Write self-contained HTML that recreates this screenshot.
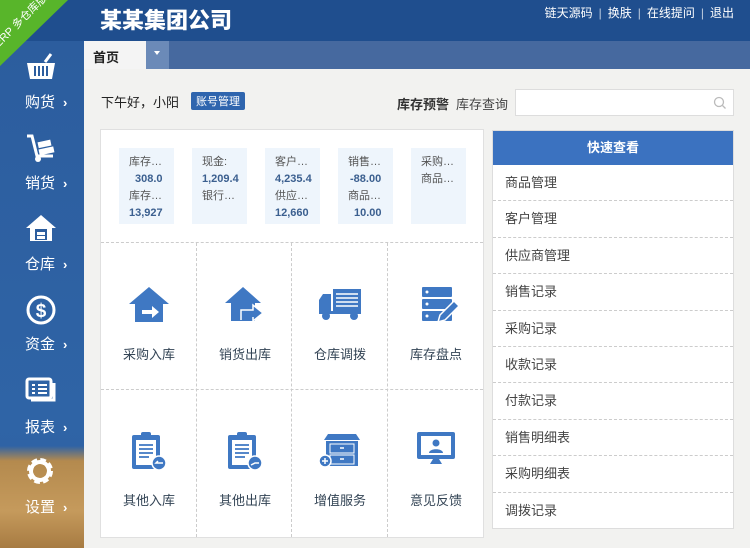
<!DOCTYPE html>
<html><head><meta charset="utf-8"><style>
*{margin:0;padding:0;box-sizing:border-box}
body{width:750px;height:548px;overflow:hidden;background:#f2f2f0;font-family:"Liberation Sans","Noto Sans CJK SC",sans-serif;position:relative;font-size:13px;color:#333}
.hdr{position:absolute;left:0;top:0;width:750px;height:41px;background:#1f4e8e}
.logo{position:absolute;left:100px;top:3px;color:#fff;font-size:22px;font-weight:900;letter-spacing:0px}
.links{position:absolute;right:16px;top:4px;color:#fff;font-size:12px}
.links span{margin:0 6px;opacity:.7}
.tabbar{position:absolute;left:84px;top:41px;width:666px;height:28px;background:#46699f}
.tab{position:absolute;left:0;top:0;width:62px;height:28px;background:#f4f4f4;font-size:13px;font-weight:bold;padding:6px 0 0 9px;color:#222}
.dd{position:absolute;left:62px;top:0;width:23px;height:28px;background:#6b8ab8}
.dd:after{content:"";position:absolute;left:8px;top:10px;border:3px solid transparent;border-top:4px solid #fff}
.side{position:absolute;left:0;top:41px;width:84px;height:507px;background:linear-gradient(#2c5d9e,#2f64a6 380px,#2f63a5 405px,#b48a4e 420px,#c59a5c 470px,#a77b42)}
.cornerbg{position:absolute;left:0;top:0;width:68px;height:66px;background:#58b52a;clip-path:polygon(0 0,100% 0,0 100%)}
.corner{position:absolute;left:-14px;top:12px;width:70px;height:18px;transform:rotate(-45deg);color:#fff;font-size:11px;text-align:center;line-height:18px;white-space:nowrap}
.ni{position:absolute;left:0;width:84px;color:#fff;text-align:center}
.ni .t{position:absolute;left:25px;font-size:15px;white-space:nowrap}
.ni .t b{font-weight:bold;font-size:13px;margin-left:8px}
.ni svg{position:absolute;left:25px}
.greet{position:absolute;left:101px;top:92px;font-size:13px;color:#222}
.btn{position:absolute;left:191px;top:92px;background:#2f65ae;color:#fff;font-size:11px;padding:1px 5px;border-radius:2px}
.kw{position:absolute;left:397px;top:94px;font-size:13px;font-weight:bold;color:#333}
.kq{position:absolute;left:456px;top:94px;font-size:13px;color:#444}
.srch{position:absolute;left:515px;top:89px;width:219px;height:27px;background:#fff;border:1px solid #ddd}
.main{position:absolute;left:100px;top:129px;width:384px;height:409px;background:#fff;border:1px solid #e0e0e0}
.card{position:absolute;top:148px;width:55px;height:76px;background:#eef5fc;font-size:11px;color:#555;padding:6px 0 0 10px;line-height:17px}
.card b{display:block;color:#3b5f8f;font-size:11px}
.gl{position:absolute;border-color:#ccc;border-style:dashed;border-width:0}
.cell{position:absolute;width:96px;text-align:center;font-size:13px;color:#345}
.cell svg{display:block;margin:0 auto}
.cell .l{position:absolute;left:0;width:100%;top:58px}
.qv{position:absolute;left:492px;top:130px;width:242px;height:399px;background:#fff;border:1px solid #ddd}
.qh{height:34px;background:#3b72c0;color:#fff;font-weight:bold;text-align:center;line-height:34px;font-size:13px}
.qr{height:36.4px;border-bottom:1px dashed #ccc;line-height:36px;padding-left:12px;font-size:13px;color:#444}
.qr:last-child{border:0}
</style></head><body>
<div class="hdr"><div class="logo">某某集团公司</div>
<div class="links">链天源码<span>|</span>换肤<span>|</span>在线提问<span>|</span>退出</div></div>
<div class="side">
<div class="ni" style="top:12px"><svg width="32" height="28" viewBox="0 0 32 28"><path d="M2 10h28l-3 16H5z" fill="#fff"/><path d="M10 13v10M14 13v10M18 13v10M22 13v10" stroke="#2c5d9e" stroke-width="2"/><path d="M20 9l6-8" stroke="#fff" stroke-width="3"/></svg><div class="t" style="top:38px">购货<b>›</b></div></div>
<div class="ni" style="top:92px"><svg width="32" height="30" viewBox="0 0 32 30"><path d="M2 3h5l5 20h16" stroke="#fff" stroke-width="3" fill="none"/><circle cx="13" cy="26" r="3" fill="#fff"/><rect x="13" y="8" width="13" height="6" fill="#fff" transform="rotate(-12 19 11)"/><rect x="14" y="15" width="15" height="6" fill="#fff" transform="rotate(-12 21 18)"/></svg><div class="t" style="top:39px">销货<b>›</b></div></div>
<div class="ni" style="top:172px"><svg width="32" height="30" viewBox="0 0 32 30"><path d="M16 2L1 15h4v13h22V15h4z" fill="#fff"/><rect x="10" y="16" width="12" height="11" fill="#2c5d9e"/><rect x="12" y="19" width="8" height="3" fill="#fff"/><rect x="12" y="23" width="8" height="3" fill="#fff"/></svg><div class="t" style="top:40px">仓库<b>›</b></div></div>
<div class="ni" style="top:253px"><svg width="32" height="32" viewBox="0 0 32 32"><circle cx="16" cy="16" r="13" fill="none" stroke="#fff" stroke-width="3"/><text x="16" y="23" text-anchor="middle" fill="#fff" font-size="19" font-weight="bold" font-family="Liberation Sans">$</text></svg><div class="t" style="top:39px">资金<b>›</b></div></div>
<div class="ni" style="top:336px"><svg width="32" height="28" viewBox="0 0 32 28"><rect x="2" y="2" width="24" height="19" rx="2" fill="none" stroke="#fff" stroke-width="3"/><path d="M29 6v17H6" stroke="#fff" stroke-width="3" fill="none"/><path d="M7 8h3M13 8h9M7 12h3M13 12h9M7 16h3M13 16h9" stroke="#fff" stroke-width="2"/></svg><div class="t" style="top:39px">报表<b>›</b></div></div>
<div class="ni" style="top:415px"><svg width="30" height="30" viewBox="0 0 30 30"><circle cx="15" cy="15" r="10" fill="none" stroke="#fff" stroke-width="6" stroke-dasharray="5 2.85"/><circle cx="15" cy="15" r="9" fill="none" stroke="#fff" stroke-width="4"/></svg><div class="t" style="top:40px">设置<b>›</b></div></div>
</div>
<div class="cornerbg"></div>
<div class="corner">ERP 多仓库版</div>
<div class="tabbar"><div class="tab">首页</div><div class="dd"></div></div>
<div class="greet">下午好，小阳</div><div class="btn">账号管理</div>
<div class="kw">库存预警</div><div class="kq">库存查询</div>
<div class="srch"><svg style="position:absolute;right:6px;top:6px" width="14" height="14" viewBox="0 0 14 14"><circle cx="6" cy="6" r="4.5" fill="none" stroke="#bbb" stroke-width="1.3"/><path d="M9.5 9.5l3 3" stroke="#bbb" stroke-width="1.3"/></svg></div>
<div class="main"></div>
<div class="card" style="left:119px">库存…<b style="padding-left:6px">308.0</b>库存…<b>13,927</b></div>
<div class="card" style="left:192px">现金:<b>1,209.4</b>银行…</div>
<div class="card" style="left:265px">客户…<b>4,235.4</b>供应…<b>12,660</b></div>
<div class="card" style="left:338px">销售…<b style="padding-left:2px">-88.00</b>商品…<b style="padding-left:6px">10.00</b></div>
<div class="card" style="left:411px">采购…<br>商品…</div>
<div class="gl" style="left:101px;top:242px;width:382px;border-top-width:1px"></div>
<div class="gl" style="left:101px;top:389px;width:382px;border-top-width:1px"></div>
<div class="gl" style="left:196px;top:243px;height:294px;border-left-width:1px"></div>
<div class="gl" style="left:291px;top:243px;height:294px;border-left-width:1px"></div>
<div class="gl" style="left:387px;top:243px;height:294px;border-left-width:1px"></div>
<div class="cell" style="left:101px;top:286px"><svg width="44" height="38" viewBox="0 0 44 38"><path d="M22 1L2 18h6v18h28V18h6z" fill="#3f78c3"/><path d="M15 24h10v-4l7 6-7 6v-4h-10z" fill="#fff"/></svg><div class="l">采购入库</div></div>
<div class="cell" style="left:197px;top:286px"><svg width="44" height="38" viewBox="0 0 44 38"><path d="M20 1L2 17h6v18h24V17h6z" fill="#3f78c3"/><path d="M18 34V24h12v-5l10 8-10 8v-4" fill="#3f78c3" stroke="#fff" stroke-width="1.5"/></svg><div class="l">销货出库</div></div>
<div class="cell" style="left:292px;top:286px"><svg width="46" height="36" viewBox="0 0 46 36"><rect x="16" y="3" width="28" height="22" fill="#3f78c3"/><path d="M19 8h22M19 12h22M19 16h22M19 20h22" stroke="#fff" stroke-width="1.5"/><path d="M2 14l4-6h8v18H2z" fill="#3f78c3"/><rect x="2" y="25" width="42" height="3" fill="#3f78c3"/><circle cx="9" cy="30" r="4" fill="#3f78c3"/><circle cx="37" cy="30" r="4" fill="#3f78c3"/></svg><div class="l">仓库调拨</div></div>
<div class="cell" style="left:388px;top:286px"><svg width="44" height="38" viewBox="0 0 44 38"><rect x="8" y="1" width="30" height="10" rx="1" fill="#3f78c3"/><rect x="8" y="13" width="30" height="10" rx="1" fill="#3f78c3"/><rect x="8" y="25" width="30" height="10" rx="1" fill="#3f78c3"/><circle cx="13" cy="6" r="1.5" fill="#fff"/><circle cx="13" cy="18" r="1.5" fill="#fff"/><circle cx="13" cy="30" r="1.5" fill="#fff"/><path d="M24 36l2-7 14-14 5 5-14 14z" fill="#3f78c3" stroke="#fff" stroke-width="1.5"/></svg><div class="l">库存盘点</div></div>
<div class="cell" style="left:101px;top:430px"><svg width="40" height="42" viewBox="0 0 40 42"><rect x="3" y="5" width="28" height="34" rx="2" fill="#3f78c3"/><rect x="7" y="10" width="20" height="25" fill="#fff"/><rect x="12" y="2" width="10" height="6" rx="2" fill="#3f78c3"/><path d="M10 15h14M10 19h14M10 23h14M10 27h10" stroke="#3f78c3" stroke-width="1.8"/><circle cx="30" cy="33" r="7" fill="#3f78c3" stroke="#fff" stroke-width="1.5"/><path d="M34 33h-7l2-2" stroke="#fff" stroke-width="1.5" fill="none"/></svg><div class="l" style="top:60px">其他入库</div></div>
<div class="cell" style="left:197px;top:430px"><svg width="40" height="42" viewBox="0 0 40 42"><rect x="3" y="5" width="28" height="34" rx="2" fill="#3f78c3"/><rect x="7" y="10" width="20" height="25" fill="#fff"/><rect x="12" y="2" width="10" height="6" rx="2" fill="#3f78c3"/><path d="M10 15h14M10 19h14M10 23h14M10 27h10" stroke="#3f78c3" stroke-width="1.8"/><circle cx="30" cy="33" r="7" fill="#3f78c3" stroke="#fff" stroke-width="1.5"/><path d="M26 35l4-2h4" stroke="#fff" stroke-width="1.5" fill="none"/></svg><div class="l" style="top:60px">其他出库</div></div>
<div class="cell" style="left:292px;top:430px"><svg width="44" height="40" viewBox="0 0 44 40"><path d="M10 4h28l4 6H6z" fill="#3f78c3"/><rect x="8" y="11" width="32" height="25" fill="#3f78c3"/><rect x="12" y="14" width="24" height="9" fill="none" stroke="#fff" stroke-width="1"/><rect x="12" y="25" width="24" height="9" fill="none" stroke="#fff" stroke-width="1"/><path d="M22 18h4M22 29h4" stroke="#fff" stroke-width="1.5"/><circle cx="7" cy="31" r="6" fill="#3f78c3" stroke="#fff" stroke-width="1.5"/><path d="M4 31h6M7 28v6" stroke="#fff" stroke-width="1.5"/></svg><div class="l" style="top:60px">增值服务</div></div>
<div class="cell" style="left:388px;top:430px"><svg width="42" height="38" viewBox="0 0 42 38"><rect x="2" y="2" width="38" height="27" rx="2" fill="#3f78c3"/><rect x="6" y="6" width="30" height="19" fill="#fff"/><circle cx="21" cy="13" r="3.5" fill="#3f78c3"/><path d="M14 23c0-5 14-5 14 0z" fill="#3f78c3"/><path d="M18 29h6l3 5H15z" fill="#3f78c3"/></svg><div class="l" style="top:60px">意见反馈</div></div>
<div class="qv"><div class="qh">快速查看</div>
<div class="qr">商品管理</div><div class="qr">客户管理</div><div class="qr">供应商管理</div><div class="qr">销售记录</div><div class="qr">采购记录</div><div class="qr">收款记录</div><div class="qr">付款记录</div><div class="qr">销售明细表</div><div class="qr">采购明细表</div><div class="qr">调拨记录</div></div>
</body></html>
